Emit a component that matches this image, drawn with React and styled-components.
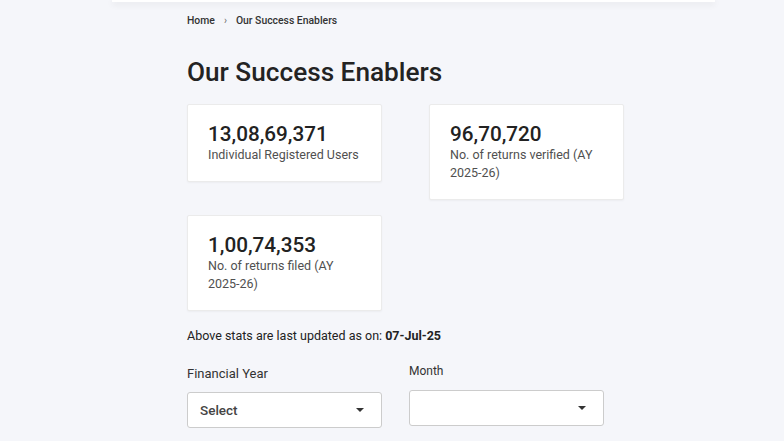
import React from "react";
import styled, { createGlobalStyle } from "styled-components";

const Global = createGlobalStyle`
  html, body { margin: 0; padding: 0; background: #f5f6fa; }
  body { font-family: Roboto, "Liberation Sans", Arial, sans-serif; color: #222; }
  * { box-sizing: border-box; }
`;

const Shell = styled.div`
  width: 603px;
  margin-left: 112px;
  min-height: 441px;
`;

const TopBar = styled.div`
  height: 2px;
  background: #ffffff;
  box-shadow: 0 2px 6px rgba(0, 0, 0, 0.12);
`;

const Content = styled.main`
  padding: 12px 0 0 75px;
  display: flex;
  flex-direction: column;
`;

const Crumbs = styled.nav`
  display: flex;
  align-items: center;
  gap: 9px;
  font-size: 10.4px;
  font-weight: 500;
  color: #333;
  line-height: 14px;
`;

const Chevron = styled.span`
  color: #777;
  font-size: 10px;
  display: inline-flex;
`;

const Title = styled.h1`
  margin: 28px 0 0;
  font-size: 26.2px;
  font-weight: 500;
  line-height: 32px;
  color: #232323;
`;

const Grid = styled.div`
  margin-top: 16px;
  display: grid;
  grid-template-columns: 195px 195px;
  column-gap: 47px;
  row-gap: 15px;
  align-items: start;
`;

const Card = styled.div`
  background: #fff;
  border: 1px solid #ebebeb;
  border-radius: 2px;
  box-shadow: 0 1px 2px rgba(0, 0, 0, 0.04);
  padding: 17px 12px 17px 20px;
`;

const Value = styled.div`
  font-size: 20.7px;
  font-weight: 500;
  line-height: 24px;
  color: #222;
`;

const Label = styled.div`
  font-size: 12.5px;
  line-height: 18px;
  color: #505050;
`;

const Year = styled.span`
  white-space: nowrap;
`;

const Updated = styled.p`
  margin: 17px 0 0;
  font-size: 12.5px;
  line-height: 16px;
  color: #222;
  b { font-weight: 700; }
`;

const Filters = styled.div`
  margin-top: 22px;
  display: grid;
  grid-template-columns: 195px 195px;
  column-gap: 27px;
  align-items: start;
`;

const Field = styled.div`
  display: flex;
  flex-direction: column;
  margin-top: ${(p) => p.$offset || 0}px;
`;

const FieldLabel = styled.label`
  font-size: ${(p) => p.$size || 13}px;
  line-height: 16px;
  color: #333;
  margin-bottom: ${(p) => p.$gap || 10}px;
`;

const SelectBox = styled.div`
  height: 36px;
  background: #fff;
  border: 1px solid #cccccc;
  border-radius: 3px;
  display: flex;
  align-items: center;
  justify-content: space-between;
  padding: 0 17px 0 12px;
  font-size: 13.5px;
  font-weight: 500;
  color: #444;
`;

const Caret = styled.span`
  width: 0;
  height: 0;
  border-left: 4px solid transparent;
  border-right: 4px solid transparent;
  border-top: 4px solid #333;
`;

const stats = [
  { value: "13,08,69,371", label: "Individual Registered Users" },
  { value: "96,70,720", label: "No. of returns verified (AY", year: "2025-26)" },
  { value: "1,00,74,353", label: "No. of returns filed (AY", year: "2025-26)" },
];

export default function App() {
  return (
    <>
      <Global />
      <Shell>
        <TopBar />
        <Content>
          <Crumbs>
            <span>Home</span>
            <Chevron>›</Chevron>
            <span>Our Success Enablers</span>
          </Crumbs>
          <Title>Our Success Enablers</Title>
          <Grid>
            {stats.map((s) => (
              <Card key={s.value}>
                <Value>{s.value}</Value>
                <Label>
                  {s.label}
                  {s.year && (
                    <>
                      {" "}
                      <Year>{s.year}</Year>
                    </>
                  )}
                </Label>
              </Card>
            ))}
          </Grid>
          <Updated>
            Above stats are last updated as on: <b>07-Jul-25</b>
          </Updated>
          <Filters>
            <Field>
              <FieldLabel $size={13} $gap={10}>Financial Year</FieldLabel>
              <SelectBox>
                <span>Select</span>
                <Caret />
              </SelectBox>
            </Field>
            <Field $offset={-3}>
              <FieldLabel $size={12} $gap={11}>Month</FieldLabel>
              <SelectBox>
                <span></span>
                <Caret />
              </SelectBox>
            </Field>
          </Filters>
        </Content>
      </Shell>
    </>
  );
}
